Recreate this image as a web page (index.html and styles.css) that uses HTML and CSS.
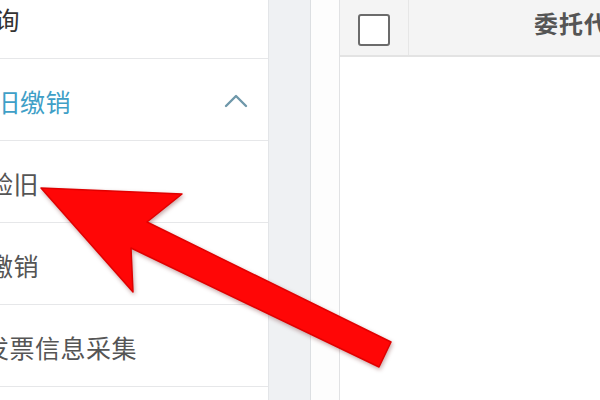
FILE: index.html
```html
<!DOCTYPE html>
<html lang="zh-CN">
<head>
<meta charset="utf-8">
<title>发票管理</title>
<link rel="stylesheet" href="styles.css">
</head>
<body>
<div class="page">
  <aside class="sidebar">
    <ul class="menu">
      <li class="item top"><span class="label lv1 dark">查询</span></li>
      <li class="item open"><span class="label lv1 active">验旧缴销</span>
        <svg class="chev" width="24" height="16" viewBox="0 0 24 16"><path d="M2 13 L12 3 L22 13" fill="none" stroke="#6f98aa" stroke-width="2.4" stroke-linecap="round" stroke-linejoin="round"/></svg>
      </li>
      <li class="item"><span class="label lv2">验旧</span></li>
      <li class="item"><span class="label lv2">缴销</span></li>
      <li class="item"><span class="label lv2b">发票信息采集</span></li>
      <li class="item"><span class="label lv2"></span></li>
    </ul>
  </aside>
  <div class="gutter"></div>
  <div class="strip"></div>
  <main class="table">
    <div class="thead">
      <div class="th check"><span class="box"></span></div>
      <div class="th title">委托代开</div>
    </div>
    <div class="tbody"></div>
  </main>
  <svg class="arrow" width="600" height="400" viewBox="0 0 600 400">
    <polygon points="41,188 182,194 147,222 391,342 379,367 131,248 133,292" fill="#ff0606" stroke="#e00000" stroke-width="1.5" stroke-linejoin="round"/>
  </svg>
</div>
</body>
</html>
```
FILE: styles.css
```css
* { box-sizing: border-box; }
html, body { margin: 0; padding: 0; }
body {
  width: 600px;
  height: 400px;
  overflow: hidden;
  background: #ffffff;
  font-family: "Noto Sans CJK SC", "Noto Sans", sans-serif;
}
.page {
  position: relative;
  display: flex;
  width: 600px;
  height: 400px;
  overflow: hidden;
}
.sidebar {
  flex: 0 0 269px;
  background: #ffffff;
  border-right: 1px solid #e3e5e8;
  overflow: hidden;
}
.menu {
  list-style: none;
  margin: -23px 0 0 0;
  padding: 0;
}
.item {
  display: flex;
  align-items: center;
  justify-content: space-between;
  height: 82px;
  border-bottom: 1px solid #e6e7e9;
  padding-right: 20px;
}
.label {
  font-size: 25px;
  letter-spacing: 0.5px;
  color: #555555;
  white-space: nowrap;
  padding-top: 2px;
}
.lv1 { margin-left: -31px; }
.lv2 { margin-left: -12px; }
.lv2b { margin-left: -16px; }
.dark { color: #333333; }
.active { color: #3f9fc7; }
.chev { margin-top: 2px; }
.gutter {
  flex: 0 0 42px;
  background: #eff1f3;
  border-right: 1px solid #dcdfe2;
}
.strip {
  flex: 0 0 29px;
  background: #fdfdfd;
  border-right: 1px solid #e1e2e4;
}
.table {
  flex: 1 1 auto;
  display: flex;
  flex-direction: column;
  background: #ffffff;
}
.thead {
  display: flex;
  height: 57px;
  background: #f4f4f4;
  border-bottom: 2px solid #e3e3e3;
}
.th.check {
  flex: 0 0 69px;
  display: flex;
  justify-content: center;
  align-items: center;
  border-right: 1px solid #e6e6e6;
  padding-top: 4px;
}
.box {
  display: block;
  width: 32px;
  height: 32px;
  border: 2px solid #6b6b6b;
  border-radius: 3px;
  background: #ffffff;
}
.th.title {
  flex: 1 1 auto;
  padding-left: 125px;
  font-size: 24px;
  font-weight: 700;
  letter-spacing: 1px;
  line-height: 46px;
  color: #555555;
  white-space: nowrap;
  overflow: hidden;
}
.tbody { flex: 1 1 auto; }
.arrow {
  position: absolute;
  left: 0;
  top: 0;
  pointer-events: none;
  filter: drop-shadow(1px 2px 2px rgba(90, 0, 0, 0.35));
}
```
